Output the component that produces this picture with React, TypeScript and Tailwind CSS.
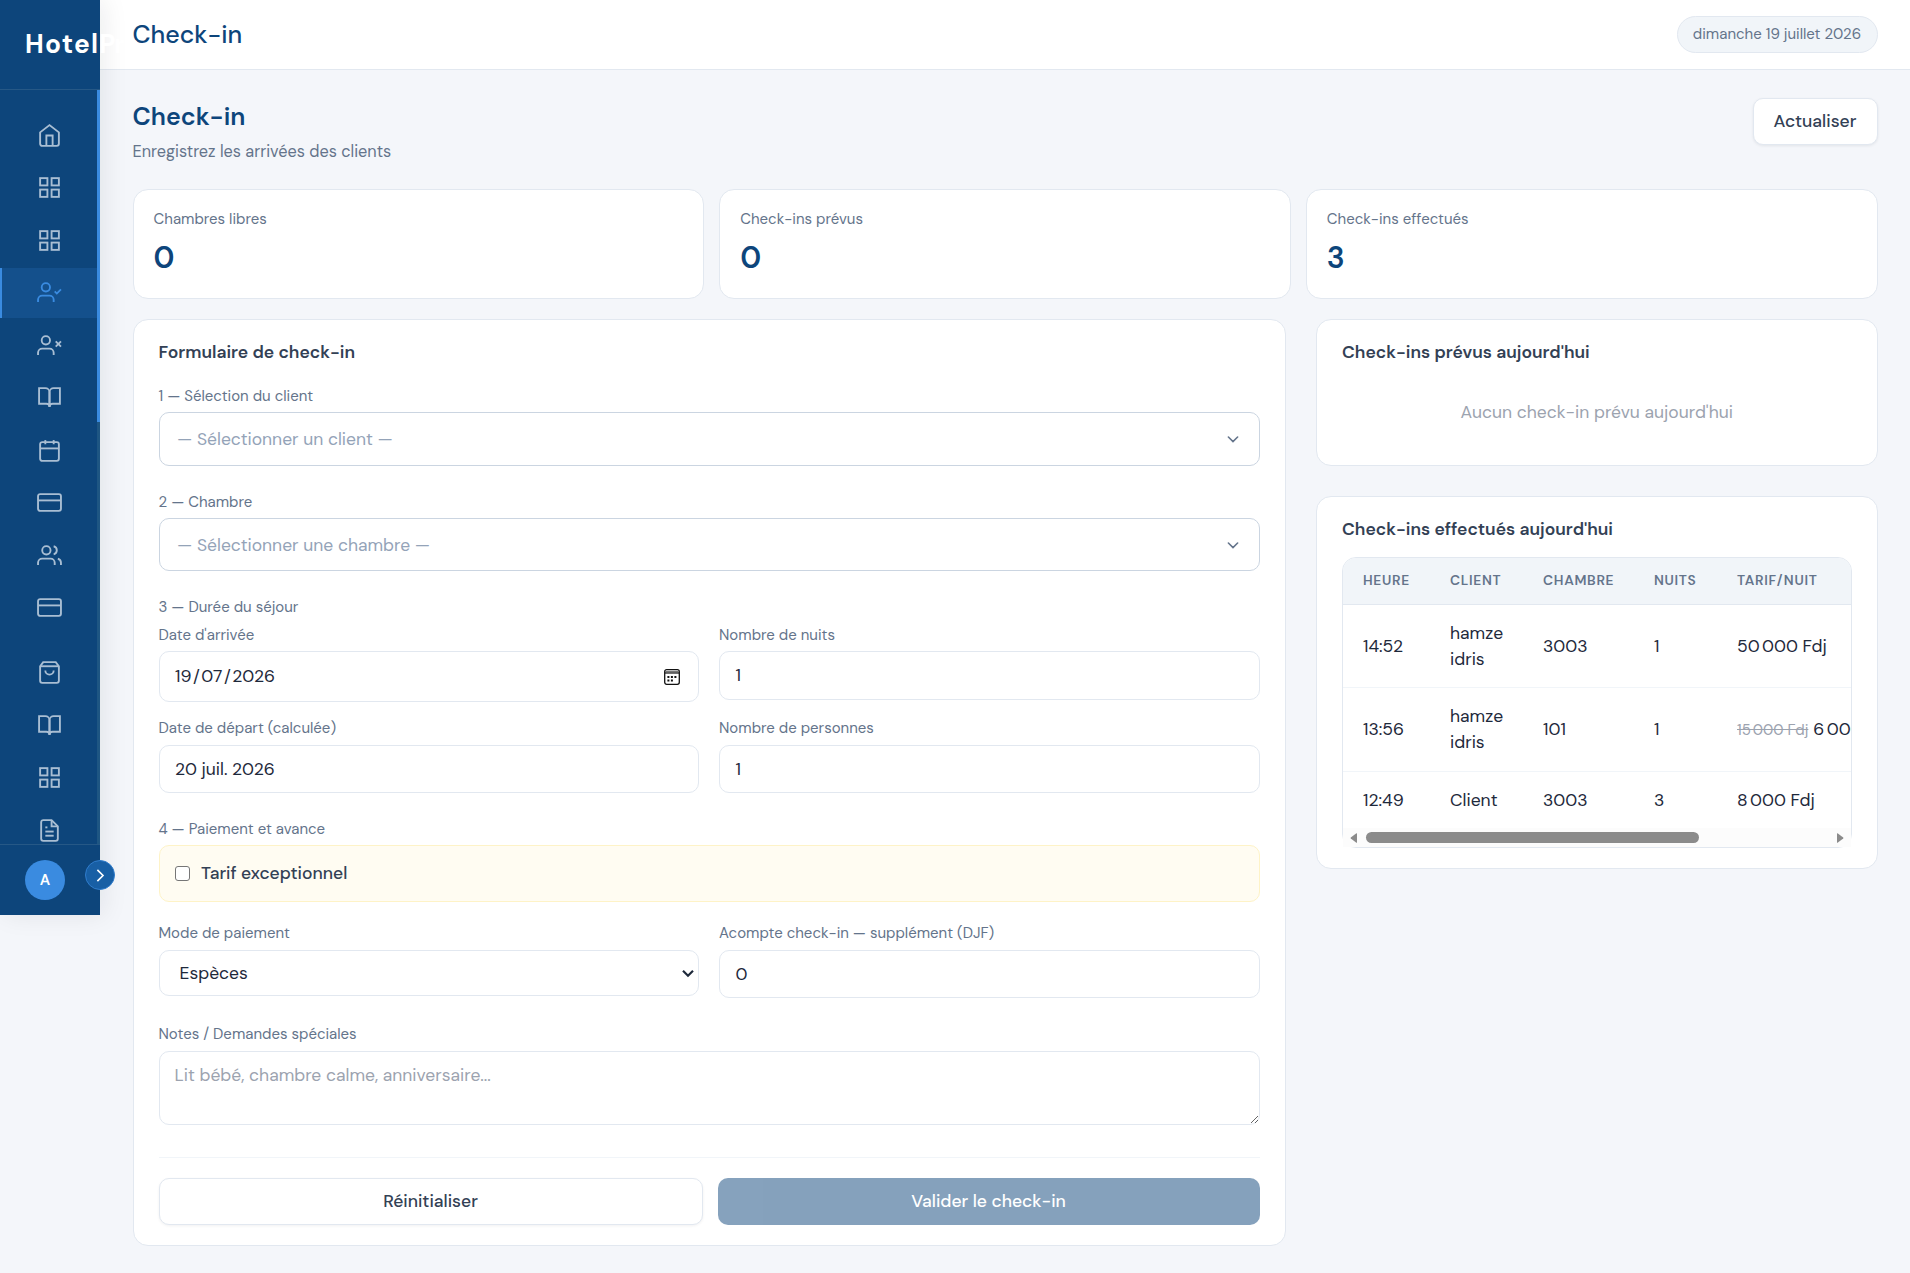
import type { ReactNode } from "react";
import clsx from "clsx";

/* Sidebar icons, 24x24 grid */
const icons: Record<string, ReactNode> = {
  home: (
    <>
      <path d="M3 9l9-7 9 7v11a2 2 0 0 1-2 2H5a2 2 0 0 1-2-2z" />
      <polyline points="9 22 9 12 15 12 15 22" />
    </>
  ),
  grid: (
    <>
      <rect x="3" y="3" width="7" height="7" />
      <rect x="14" y="3" width="7" height="7" />
      <rect x="3" y="14" width="7" height="7" />
      <rect x="14" y="14" width="7" height="7" />
    </>
  ),
  userCheck: (
    <>
      <path d="M16 21v-2a4 4 0 0 0-4-4H5a4 4 0 0 0-4 4v2" />
      <circle cx="8.5" cy="7" r="4" />
      <polyline points="17 11 19 13 23 9" />
    </>
  ),
  userX: (
    <>
      <path d="M16 21v-2a4 4 0 0 0-4-4H5a4 4 0 0 0-4 4v2" />
      <circle cx="8.5" cy="7" r="4" />
      <line x1="18" y1="8" x2="23" y2="13" />
      <line x1="23" y1="8" x2="18" y2="13" />
    </>
  ),
  book: (
    <>
      <path d="M2 3h6a4 4 0 0 1 4 4v14a3 3 0 0 0-3-3H2z" />
      <path d="M22 3h-6a4 4 0 0 0-4 4v14a3 3 0 0 1 3-3h7z" />
    </>
  ),
  calendar: (
    <>
      <rect x="3" y="4" width="18" height="18" rx="2" />
      <line x1="16" y1="2" x2="16" y2="6" />
      <line x1="8" y1="2" x2="8" y2="6" />
      <line x1="3" y1="10" x2="21" y2="10" />
    </>
  ),
  card: (
    <>
      <rect x="1" y="4" width="22" height="16" rx="2" />
      <line x1="1" y1="10" x2="23" y2="10" />
    </>
  ),
  users: (
    <>
      <path d="M17 21v-2a4 4 0 0 0-4-4H5a4 4 0 0 0-4 4v2" />
      <circle cx="9" cy="7" r="4" />
      <path d="M23 21v-2a4 4 0 0 0-3-3.87" />
      <path d="M16 3.13a4 4 0 0 1 0 7.75" />
    </>
  ),
  bag: (
    <>
      <path d="M6 2L3 6v14a2 2 0 0 0 2 2h14a2 2 0 0 0 2-2V6l-3-4z" />
      <line x1="3" y1="6" x2="21" y2="6" />
      <path d="M16 10a4 4 0 0 1-8 0" />
    </>
  ),
  file: (
    <>
      <path d="M14 2H6a2 2 0 0 0-2 2v16a2 2 0 0 0 2 2h12a2 2 0 0 0 2-2V8z" />
      <polyline points="14 2 14 8 20 8" />
      <line x1="16" y1="13" x2="8" y2="13" />
      <line x1="16" y1="17" x2="8" y2="17" />
      <polyline points="10 9 9 9 8 9" />
    </>
  ),
};

const mainNav = ["home", "grid", "grid", "userCheck", "userX", "book", "calendar", "card", "users", "card"];
const secondaryNav = ["bag", "book", "grid", "file"];

const stats = [
  { label: "Chambres libres", value: "0" },
  { label: "Check-ins prévus", value: "0" },
  { label: "Check-ins effectués", value: "3" },
];

const arrivals = [
  { heure: "14:52", client: "hamze idris", chambre: "3003", nuits: "1", tarif: "50\u202f000 Fdj" },
  { heure: "13:56", client: "hamze idris", chambre: "101", nuits: "1", ancien: "15\u202f000 Fdj", tarif: "6\u202f000 Fdj" },
  { heure: "12:49", client: "Client", chambre: "3003", nuits: "3", tarif: "8\u202f000 Fdj" },
];

function NavItem({ icon, active = false }: { icon: string; active?: boolean }) {
  return (
    <a
      className={clsx(
        "flex h-[50px] shrink-0 items-center justify-center border-l-2",
        active ? "border-[#3a8be0] bg-[#14508c] text-[#3a8be0]" : "border-transparent text-[#a9bed3]"
      )}
    >
      <svg className="size-[25px]" viewBox="0 0 24 24" fill="none" stroke="currentColor" strokeWidth="1.8">
        {icons[icon]}
      </svg>
    </a>
  );
}

function Sidebar() {
  return (
    <aside className="relative z-10 flex h-[915px] w-[100px] shrink-0 flex-col bg-[#0d457b] shadow-[4px_0_24px_rgba(15,23,42,0.08)]">
      <div className="flex h-[90px] shrink-0 items-center border-b border-[#265886] pl-[25px]">
        <span className="text-[26.25px] leading-none font-bold tracking-[1.25px] whitespace-nowrap text-white">
          Hotel<span className="tracking-[-1.3px]">Pro</span>
        </span>
      </div>

      <div className="flex h-[754px]">
        <nav className="flex w-[97px] flex-col gap-[2.5px] overflow-hidden pt-5">
          {mainNav.map((icon, i) => (
            <NavItem key={i} icon={icon} active={icon === "userCheck"} />
          ))}
          <div className="h-2.5 shrink-0" />
          {secondaryNav.map((icon, i) => (
            <NavItem key={i} icon={icon} />
          ))}
        </nav>
        <div className="w-[3px] bg-[#1e5683]">
          <div className="h-[332px] bg-[#3a8be0]" />
        </div>
      </div>

      <div className="flex flex-1 items-center border-t border-[#265886] pl-[25px]">
        <div className="flex size-10 items-center justify-center rounded-full bg-[#3a8be0] text-[15px] font-semibold text-white">
          A
        </div>
      </div>

      {/* Expand button */}
      <button className="absolute bottom-[25px] left-[85px] flex size-[30px] items-center justify-center rounded-full border border-[#2f7ccc] bg-[#185fa5]">
        <svg className="size-[15px]" viewBox="0 0 24 24" fill="none" stroke="#fff" strokeWidth="2.6">
          <polyline points="7 3 16 12 7 21" />
        </svg>
      </button>
    </aside>
  );
}

function Label({ children, className }: { children: ReactNode; className?: string }) {
  return (
    <div className={clsx("mb-1.5 h-5 text-[15px] leading-5 whitespace-nowrap text-[#64748b]", className)}>{children}</div>
  );
}

function Picker({ placeholder, className }: { placeholder: string; className?: string }) {
  return (
    <div
      className={clsx(
        "flex items-center justify-between rounded-[10px] border border-[#cbd5e1] bg-white pr-5 pl-[17.5px] text-[17.5px] text-[#94a3b8]",
        className
      )}
    >
      <span>{placeholder}</span>
      <svg className="h-[7px] w-3" viewBox="0 0 12 7" fill="none" stroke="#64748b" strokeWidth="1.6" strokeLinecap="round">
        <path d="M1.4 1l4.6 4.6L10.6 1" />
      </svg>
    </div>
  );
}

function Field({ children, className }: { children: ReactNode; className?: string }) {
  return (
    <div
      className={clsx(
        "flex items-center justify-between rounded-[10px] border border-[#e2e8f0] bg-white px-[15.5px] text-[17.5px] text-[#1e293b]",
        className
      )}
    >
      {children}
    </div>
  );
}

function CheckinForm() {
  return (
    <section className="h-[927px] w-[1153px] rounded-[15px] border border-[#e2e8f0] bg-white px-[25px] pt-5">
      <h3 className="h-6 text-[17.5px] leading-6 font-semibold text-[#334155]">Formulaire de check-in</h3>

      {/* Client */}
      <Label className="mt-[22px]">1 — Sélection du client</Label>
      <Picker placeholder="— Sélectionner un client —" className="h-[54px]" />

      {/* Chambre */}
      <Label className="mt-[26px]">2 — Chambre</Label>
      <Picker placeholder="— Sélectionner une chambre —" className="h-[53px] pt-px" />

      {/* Séjour */}
      <div className="mt-[26px] h-5 text-[15px] leading-5 text-[#64748b]">3 — Durée du séjour</div>
      <div className="mt-2 grid grid-cols-2 gap-x-5">
        <div>
          <Label>Date d'arrivée</Label>
          <Field className="h-[51px]">
            <span>
              19<span className="mx-[1.5px]">/</span>07<span className="mx-[1.5px]">/</span>2026
            </span>
            <svg className="mr-[2.5px] size-4" viewBox="0 0 16 16" fill="none" stroke="#111" strokeWidth="1.3">
              <rect x=".7" y=".7" width="14.6" height="14.6" rx="2" />
              <path d="M1 2.6h14" stroke="#777" strokeWidth="1.4" />
              <path d="M1 4h14" strokeWidth="1.2" />
              <path d="M3.4 8h2M6.9 8h2M10.4 8h2M3.4 11.4h2M6.9 11.4h2" strokeWidth="2" />
            </svg>
          </Field>
        </div>
        <div>
          <Label>Nombre de nuits</Label>
          <Field className="h-[49px]">1</Field>
        </div>
      </div>
      <div className="mt-4 grid grid-cols-2 gap-x-5">
        <div>
          <Label className="mb-[7px]">Date de départ (calculée)</Label>
          <Field className="h-12">20 juil. 2026</Field>
        </div>
        <div>
          <Label className="mb-[7px]">Nombre de personnes</Label>
          <Field className="h-12">1</Field>
        </div>
      </div>

      {/* Paiement */}
      <Label className="mt-[26px]">4 — Paiement et avance</Label>
      <div className="flex h-[57px] items-center gap-[11.5px] rounded-[10px] border border-[#fef3c7] bg-[#fffcf2] px-[15px]">
        <span className="size-[15px] rounded-[3px] border border-[#767676] bg-white" />
        <span className="text-[17.5px] font-medium text-[#334155]">Tarif exceptionnel</span>
      </div>
      <div className="mt-[21px] grid grid-cols-2 gap-x-5">
        <div>
          <Label className="mb-[7px]">Mode de paiement</Label>
          <div className="flex h-[46px] items-center justify-between rounded-[10px] border border-[#e2e8f0] bg-white pr-[4.5px] pl-5 text-[17.5px] text-[#1e293b]">
            <span>Espèces</span>
            <svg className="h-[9px] w-3" viewBox="0 0 12 9" fill="none" stroke="#1e293b" strokeWidth="2.2">
              <path d="M1 1.8l5 5 5-5" />
            </svg>
          </div>
        </div>
        <div>
          <Label className="mb-[7px]">Acompte check-in — supplément (DJF)</Label>
          <Field className="h-12">0</Field>
        </div>
      </div>

      {/* Notes */}
      <Label className="mt-[26px] mb-[7px]">Notes / Demandes spéciales</Label>
      <textarea
        className="block h-[74px] w-full resize rounded-[10px] border border-[#e2e8f0] px-[15px] py-[11px] text-[17.5px] leading-6 placeholder:text-[#9ca3af]"
        placeholder="Lit bébé, chambre calme, anniversaire..."
      />

      <div className="mt-8 flex gap-[15px] border-t border-[#f1f5f9] pt-5">
        <button className="h-[47px] w-[544px] rounded-[10px] border border-[#e2e8f0] bg-white text-[17.5px] font-medium text-[#334155] shadow-[0_1px_3px_rgba(15,23,42,0.06)]">
          Réinitialiser
        </button>
        <button className="h-[47px] flex-1 rounded-[10px] bg-[#0d457b] text-[17.5px] font-medium text-white opacity-50">
          Valider le check-in
        </button>
      </div>
    </section>
  );
}

function DoneTable() {
  return (
    <div className="mt-4 h-[291px] rounded-[14px] border border-[#e2e8f0]">
      <div className="h-[270px] overflow-hidden rounded-t-[13px]">
        <table className="w-[760px] table-fixed border-collapse text-left">
          <colgroup>
            <col className="w-[87px]" />
            <col className="w-[93px]" />
            <col className="w-[111px]" />
            <col className="w-[83px]" />
            <col />
          </colgroup>
          <thead>
            <tr className="h-[46px] border-b border-[#e2e8f0] bg-[#f1f5f9] text-[13.75px] tracking-[0.69px] text-[#64748b] uppercase">
              {["Heure", "Client", "Chambre", "Nuits", "Tarif/nuit"].map((title) => (
                <th key={title} className="pl-5 font-semibold">
                  {title}
                </th>
              ))}
            </tr>
          </thead>
          <tbody className="text-[17.5px] leading-[26px] text-[#1e293b]">
            {arrivals.map((row) => (
              <tr
                key={row.heure}
                className={clsx(row.client === "Client" ? "h-[57px]" : "h-[83.5px] border-b border-[#f1f5f9]")}
              >
                <td className="pl-5">{row.heure}</td>
                <td className="pr-4 pl-5">{row.client}</td>
                <td className="pl-5">{row.chambre}</td>
                <td className="pl-5">{row.nuits}</td>
                <td className="pl-5 whitespace-nowrap">
                  {row.ancien && <span className="mr-[5px] text-[15px] text-[#9ca3af] line-through">{row.ancien}</span>}
                  {row.tarif}
                </td>
              </tr>
            ))}
          </tbody>
        </table>
      </div>

      {/* Horizontal scrollbar */}
      <div className="flex h-[19px] items-center bg-[#fcfcfc] px-[7px]">
        <svg className="h-[10px] w-2" viewBox="0 0 8 10" fill="#8b8b8b">
          <path d="M7 0.5v9q0 .5-.6 .2L.8 5.4q-.5-.4 0-.8L6.4 .3q.6-.3 .6 .2z" />
        </svg>
        <div className="ml-2 h-[11px] w-[333px] rounded-full bg-[#8b8b8b]" />
        <svg className="ml-auto h-[10px] w-2" viewBox="0 0 8 10" fill="#8b8b8b">
          <path d="M1 0.5v9q0 .5 .6 .2L7.2 5.4q.5-.4 0-.8L1.6 .3q-.6-.3-.6 .2z" />
        </svg>
      </div>
    </div>
  );
}

export default function App() {
  return (
    <div className="flex h-[1273px] w-[1910px] overflow-hidden bg-[#f4f6fa] font-['DM_Sans','Inter',sans-serif]">
      <Sidebar />

      <div className="flex-1">
        {/* Top bar */}
        <header className="flex h-[70px] items-center justify-between border-b border-[#e2e8f0] bg-white px-[32.5px]">
          <div className="text-[25px] leading-none font-medium text-[#0d457b]">Check-in</div>
          <div className="flex h-[37px] w-[201px] items-center justify-center rounded-full border border-[#e2e8f0] bg-[#f1f5f9] text-[15px] text-[#64748b]">
            dimanche 19 juillet 2026
          </div>
        </header>

        <main className="px-[32.5px]">
          {/* Page heading */}
          <div className="flex h-[119px] items-start justify-between pt-7">
            <div>
              <h1 className="text-[25px] leading-[38px] font-semibold text-[#0d457b]">Check-in</h1>
              <p className="mt-[3px] text-[16.3px] leading-[26px] text-[#64748b]">Enregistrez les arrivées des clients</p>
            </div>
            <button className="h-[47px] w-[125px] rounded-[10px] border border-[#e2e8f0] bg-white text-[17.5px] font-medium text-[#334155] shadow-[0_1px_3px_rgba(15,23,42,0.08)]">
              Actualiser
            </button>
          </div>

          {/* Stats */}
          <div className="grid grid-cols-3 gap-[15px]">
            {stats.map((stat) => (
              <div key={stat.label} className="h-[110px] rounded-[15px] border border-[#e2e8f0] bg-white px-5 pt-[18.5px]">
                <div className="text-[15px] leading-5 text-[#64748b]">{stat.label}</div>
                <div className="mt-3 text-[30px] leading-[34px] font-semibold text-[#0d457b]">{stat.value}</div>
              </div>
            ))}
          </div>

          <div className="mt-5 flex items-start justify-between">
            <CheckinForm />

            <div className="flex w-[561.5px] flex-col gap-[30px]">
              <section className="h-[147px] rounded-[15px] border border-[#e2e8f0] bg-white px-[25px] pt-5">
                <h3 className="text-[17.5px] leading-6 font-semibold text-[#334155]">Check-ins prévus aujourd'hui</h3>
                <p className="mt-9 text-center text-[17.5px] leading-6 text-[#9ca3af]">Aucun check-in prévu aujourd'hui</p>
              </section>
              <section className="h-[373px] rounded-[15px] border border-[#e2e8f0] bg-white px-[25px] pt-5">
                <h3 className="text-[17.5px] leading-6 font-semibold text-[#334155]">Check-ins effectués aujourd'hui</h3>
                <DoneTable />
              </section>
            </div>
          </div>
        </main>
      </div>
    </div>
  );
}
